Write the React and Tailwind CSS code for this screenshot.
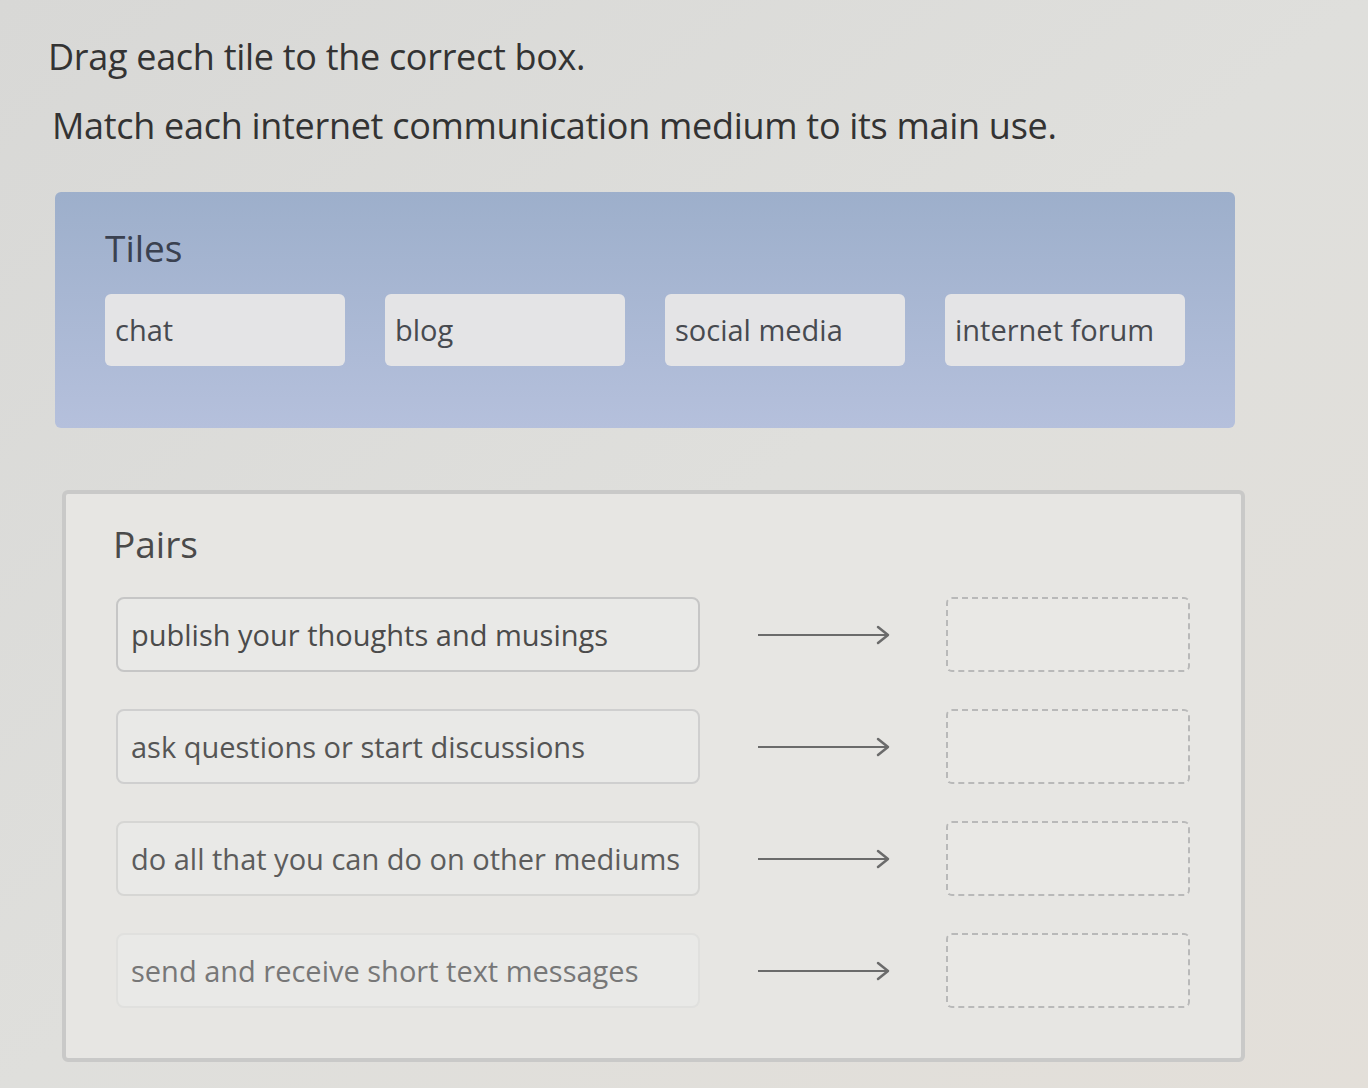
const tiles = ["chat", "blog", "social media", "internet forum"];

const pairs = [
  { text: "publish your thoughts and musings", tone: "text-[#4b4b4b]", edge: "border-[#c6c6c6]" },
  { text: "ask questions or start discussions", tone: "text-[#555555]", edge: "border-[#cfcfcf]" },
  { text: "do all that you can do on other mediums", tone: "text-[#5c5c5c]", edge: "border-[#d6d6d4]" },
  { text: "send and receive short text messages", tone: "text-[#777777]", edge: "border-[#e0e0de]" },
];

function Arrow() {
  return (
    <svg width="134" height="24" viewBox="0 0 134 24" fill="none">
      <line x1="0" y1="12" x2="130" y2="12" stroke="#6b6b6b" strokeWidth="2" />
      <polyline
        points="120,4 130,12 120,20"
        stroke="#6b6b6b"
        strokeWidth="2.5"
        strokeLinecap="round"
        strokeLinejoin="round"
      />
    </svg>
  );
}

export default function App() {
  return (
    <div
      className="min-h-[1088px] w-[1368px] bg-gradient-to-br from-[#d8d8d6] via-[#dfdfdc] to-[#e3dfd9] pl-[48px] pt-[35px] pb-[28px]"
      style={{ fontFamily: '"Open Sans", "Noto Sans", sans-serif' }}
    >

      {/* Instructions */}

      <h1 className="text-[36px] leading-[44px] text-[#333333] font-medium tracking-[-0.3px]">
        Drag each tile to the correct box.
      </h1>

      <p className="mt-[25px] ml-[4px] text-[36px] leading-[44px] text-[#333333] font-medium tracking-[-0.3px]">
        Match each internet communication medium to its main use.
      </p>


      {/* Tiles */}

      <div className="mt-[44px] ml-[7px] w-[1180px] rounded-md bg-gradient-to-b from-[#9dafcb] to-[#b5c0dc] pl-[50px] pt-[34px] pb-[62px]">

        <h2 className="text-[37px] leading-[44px] text-[#3a4150]">
          Tiles
        </h2>

        <div className="mt-[24px] flex gap-[40px]">
          {tiles.map((tile) => (
            <div
              key={tile}
              className="flex h-[72px] w-[240px] items-center rounded-md bg-[#e4e4e6] pl-[10px] text-[29px] text-[#474a50]"
            >
              {tile}
            </div>
          ))}
        </div>

      </div>


      {/* Pairs */}

      <div className="mt-[62px] ml-[14px] w-[1183px] rounded-md border-4 border-[#c9c9c8] bg-[#e7e6e3] pl-[50px] pt-[28px] pb-[50px]">

        <h2 className="ml-[-3px] text-[37px] leading-[44px] text-[#4a4a4a]">
          Pairs
        </h2>

        <div className="mt-[31px] flex flex-col gap-[37px]">
          {pairs.map((pair) => (
            <div key={pair.text} className="flex items-center">

              <div
                className={`flex h-[75px] w-[584px] items-center rounded-lg border-2 bg-[#e9e9e7] pl-[13px] text-[29px] ${pair.edge} ${pair.tone}`}
              >
                {pair.text}
              </div>

              <div className="ml-[58px] w-[132px]">
                <Arrow />
              </div>

              <div className="ml-[56px] h-[75px] w-[244px] rounded-md border-2 border-dashed border-[#b9b9b9] bg-[#e9e8e5]" />

            </div>
          ))}
        </div>

      </div>

    </div>
  );
}
